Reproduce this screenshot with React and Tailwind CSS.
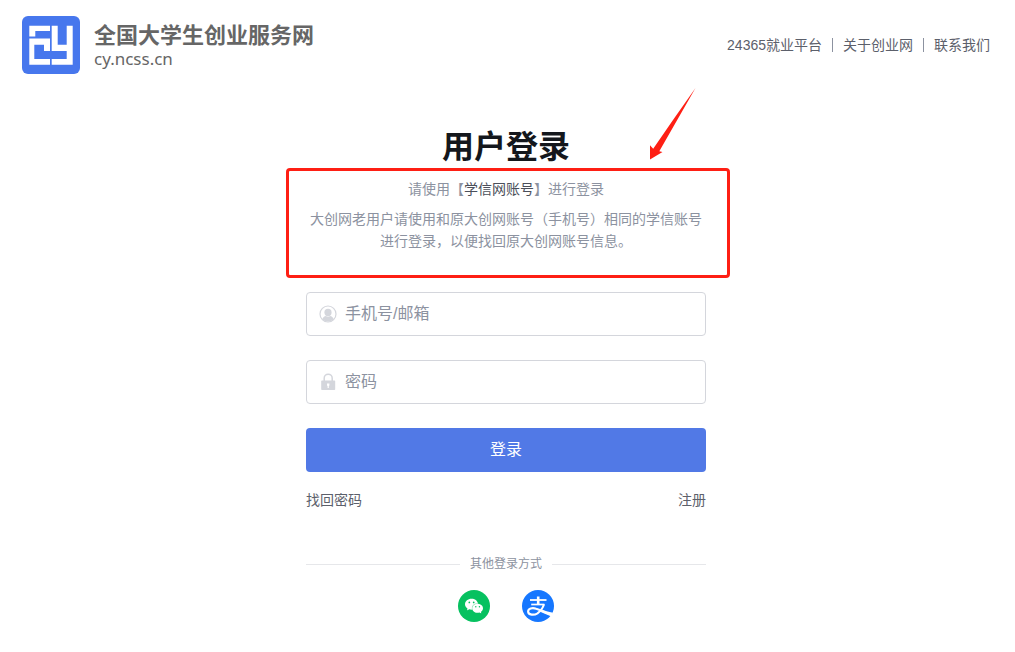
import { SiWechat } from 'react-icons/si'

const NAV_LINKS = ['24365就业平台', '关于创业网', '联系我们']

function Logo() {
  return (
    <svg viewBox="0 0 58 58" className="size-[58px] shrink-0" aria-hidden="true">
      <rect width="58" height="58" rx="6" fill="#4777ed" />
      <g fill="#fff">
        <path d="M7.3 9.800H28V15H13.300v5.500h-6z" />
        <path d="M7.300 22.500H28v12.600h-6v-6.400H12.300v14.300H28v5.700H7.300z" />
        <path d="M29.700 9.800h6v19h9v-19h6v38.900h-21V43h15v-7.900h-15z" />
      </g>
    </svg>
  )
}

function UserIcon() {
  return (
    <svg viewBox="0 0 18 18" className="size-[18px] shrink-0" aria-hidden="true">
      <circle cx="9" cy="9" r="8" fill="none" stroke="#d4d6dc" strokeWidth="1.2" />
      <circle cx="9" cy="7.4" r="3.6" fill="#d4d6dc" />
      <path d="M3.2 14.2c.7-2 2.2-3 3.7-3.3 1.3.7 2.9.7 4.2 0 1.5.3 3 1.3 3.7 3.3A8 8 0 0 1 9 16.6a8 8 0 0 1-5.8-2.4z" fill="#d4d6dc" />
    </svg>
  )
}

function LockIcon() {
  return (
    <svg viewBox="0 0 18 18" className="size-[18px] shrink-0" aria-hidden="true">
      <path d="M5.2 8V5.2a4 4 0 0 1 8 0V8" fill="none" stroke="#d4d6dc" strokeWidth="1.5" />
      <rect x="2.2" y="7.6" width="14" height="9.4" rx=".8" fill="#d4d6dc" />
      <path d="M8 10.5h2.4v1.9l-.6.5V15H8.6v-2.100L8 12.400z" fill="#fff" />
    </svg>
  )
}

function AlipayIcon() {
  return (
    <svg viewBox="0 0 32 32" className="size-8" aria-hidden="true">
      <circle cx="16" cy="16" r="16" fill="#1677ff" />
      <g fill="none" stroke="#fff">
        <path d="M16.2 6.5v8.5" strokeWidth="2.6" />
        <path d="M8 10h16.5" strokeWidth="1.8" />
        <path d="M9.2 14.500h13.200" strokeWidth="1.7" />
        <path d="M22 14.300c-1.300 4.200-3.600 7-6.500 9-3.200 2-9.300 2-9.400-1.700 0-3 4-4.200 8.100-2.900 4.600 1.300 8.800 4 16.300 6.500" strokeWidth="2.1" />
      </g>
      <path d="M19 19.200c3.600 1.500 7.400 2.700 12 3.600a16 16 0 0 1-2.100 3.500c-4.200-1.500-8.200-3.300-11.800-5z" fill="#fff" />
    </svg>
  )
}

// 带图标的输入框
function Field({ id, label, icon, type }) {
  return (
    <label
      htmlFor={id}
      className="flex h-11 items-center gap-2 rounded border border-[#d4d6dc] px-3"
    >
      {icon}
      <input
        id={id}
        type={type}
        placeholder={label}
        aria-label={label}
        className="h-full min-w-0 flex-1 bg-transparent text-base outline-none placeholder:text-[#8c92a0]"
      />
    </label>
  )
}

export default function App() {
  return (
    <div
      lang="zh-CN"
      className="bg-white pr-[25px] pb-[30px] pl-[22px] font-['Liberation_Sans','Noto_Sans_CJK_SC',sans-serif] text-sm text-[#5c606b]"
    >
      <header className="flex items-center justify-between pt-4">
        <a href="#" className="flex items-center gap-3.5 text-[#666]">
          <Logo />
          <span className="flex flex-col">
            <span className="text-[22px] leading-7 font-bold">全国大学生创业服务网</span>
            <span className="font-['Noto_Sans',sans-serif] text-[17px] leading-[18px]">cy.ncss.cn</span>
          </span>
        </a>
        <nav className="flex items-center">
          {NAV_LINKS.map((text, i) => (
            <span key={text} className="flex items-center">
              {i > 0 && <span className="mx-2.5 h-3.5 w-px bg-[#8c92a0]" />}
              <a href="#" className="leading-[22px]">{text}</a>
            </span>
          ))}
        </nav>
      </header>

      <main className="mx-auto max-w-[400px] pt-[52px]">
        <h1 className="text-center text-[32px] leading-[42px] font-bold text-[#14171c]">用户登录</h1>

        {/* 登录说明 */}
        <section className="relative pt-2.5 pb-10 text-center leading-[22px] text-[#8c92a0]">
          <p>
            请使用【<a href="#" className="text-[#4b4f5a]">学信网账号</a>】进行登录
          </p>
          <p className="mt-2">
            大创网老用户请使用和原大创网账号（手机号）相同的学信账号进行登录，以便找回原大创网账号信息。
          </p>
          <div className="pointer-events-none absolute top-0 -right-6 bottom-3.5 -left-5 rounded border-3 border-[#fe1f14]" />
          <svg
            viewBox="0 0 46 72"
            className="pointer-events-none absolute right-2.5 bottom-full mb-2 h-[72px] w-[46px]"
            aria-hidden="true"
          >
            <path d="M45.500 0L9.300 63.300l3.200.7L0 71.500V57.300l3.200 3.400L23 32z" fill="#fe1f14" />
          </svg>
        </section>

        <form className="flex flex-col gap-6" onSubmit={(e) => e.preventDefault()}>
          <Field id="account" type="text" label="手机号/邮箱" icon={<UserIcon />} />
          <Field id="password" type="password" label="密码" icon={<LockIcon />} />
          <button type="submit" className="h-11 rounded bg-[#5179e6] text-base text-white">
            登录
          </button>
        </form>

        <div className="mt-[17px] flex justify-between leading-[22px]">
          <a href="#">找回密码</a>
          <a href="#">注册</a>
        </div>

        {/* 第三方登录 */}
        <div className="mt-[43px] flex items-center gap-2.5 text-xs leading-5 text-[#8c92a0]">
          <span className="h-px flex-1 bg-[#e6e7ea]" />
          其他登录方式
          <span className="h-px flex-1 bg-[#e6e7ea]" />
        </div>
        <div className="mt-4 flex justify-center gap-8">
          <button
            type="button"
            aria-label="微信登录"
            className="flex size-8 items-center justify-center rounded-full bg-[#07c160] text-white"
          >
            <SiWechat className="size-[18px]" />
          </button>
          <button type="button" aria-label="支付宝登录" className="size-8 rounded-full">
            <AlipayIcon />
          </button>
        </div>
      </main>
    </div>
  )
}
